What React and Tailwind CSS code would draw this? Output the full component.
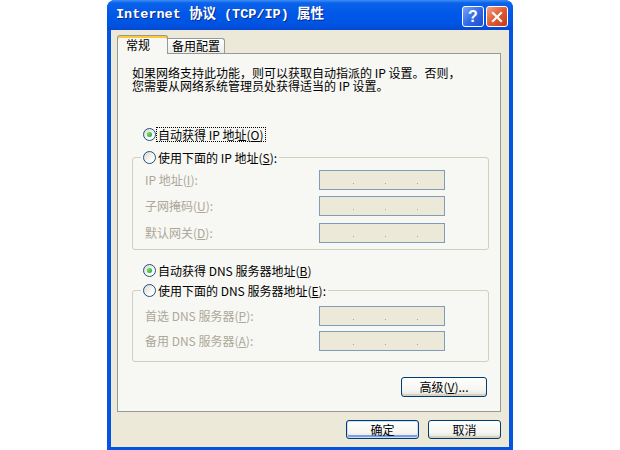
import React from 'react';

const Acc = ({ children }) => <span className="underline underline-offset-[1px]">{children}</span>;

function Radio({ checked }) {
  return (
    <span className="w-[13px] h-[13px] shrink-0 rounded-full border border-[#1c5180] bg-[linear-gradient(135deg,#d9d6cc,#ffffff_70%)] flex items-center justify-center">
      {checked && <span className="w-[5px] h-[5px] rounded-full bg-[radial-gradient(circle_at_35%_35%,#6fe06f,#1a9a1a)]" />}
    </span>
  );
}

function IpField() {
  return (
    <div className="w-[126px] h-[20px] border border-[#7f9db9] bg-[#ece9d8] flex items-end pl-[33px] pb-[5px] gap-[31px]">
      <span className="w-[1px] h-[1px] bg-[#aca899]" />
      <span className="w-[1px] h-[1px] bg-[#aca899]" />
      <span className="w-[1px] h-[1px] bg-[#aca899]" />
    </div>
  );
}

function FieldRow({ label, className = '' }) {
  return (
    <div className={`flex items-center ${className}`}>
      <span className="w-[178px] pl-[4px] text-[#aca899] leading-[14px]">{label}</span>
      <IpField />
    </div>
  );
}

function XpButton({ children, className = '', isDefault }) {
  const ring = isDefault
    ? 'shadow-[inset_0_0_0_1px_#cedcf7,inset_0_-2px_0_1px_#7a9de6]'
    : 'shadow-[inset_0_-2px_0_0_#d6d0c5]';
  return (
    <div className={`flex items-center justify-center rounded-[3px] border border-[#003c74] bg-[linear-gradient(to_bottom,#ffffff,#f4f4f0_70%,#e3e0d6)] leading-[14px] ${ring} ${className}`}>
      {children}
    </div>
  );
}

export default function App() {
  return (
    <div className="w-[620px] h-[450px] bg-white flex justify-center font-['Noto_Sans_CJK_SC',sans-serif] text-[12px] text-black">
      <div className="w-[406px] h-[450px] flex flex-col rounded-t-[8px] overflow-hidden bg-[#0553e1]">
        {/* title bar */}
        <div className="h-[30px] shrink-0 flex items-center pl-[9px] pr-[5px] bg-[linear-gradient(to_bottom,#3d8ff6_0%,#0b62ea_10%,#0058e8_45%,#0053e1_85%,#0547d2_100%)]">
          <span className="flex-1 text-white font-bold text-[13.5px] leading-[16px] font-['Liberation_Mono','Noto_Sans_CJK_SC',monospace] [text-shadow:1px_1px_0_#0b2a8c]">
            Internet 协议 (TCP/IP) 属性
          </span>
          <div className="flex items-center gap-[2px] mt-[3px]">
            <div className="w-[22px] h-[21px] rounded-[3px] border border-white bg-[linear-gradient(135deg,#78a6f8,#2f67e6_55%,#1c4ed2)] flex items-center justify-center text-white font-bold text-[16px] leading-none font-['Liberation_Sans',sans-serif]">
              ?
            </div>
            <div className="w-[22px] h-[21px] rounded-[3px] border border-white bg-[linear-gradient(135deg,#f2a283,#e05a32_50%,#c23d18)] flex items-center justify-center">
              <svg width="12" height="12" viewBox="0 0 12 12">
                <path d="M2 2 L10 10 M10 2 L2 10" stroke="#fff" strokeWidth="2.2" strokeLinecap="square" />
              </svg>
            </div>
          </div>
        </div>

        {/* dialog body */}
        <div className="flex-1 mx-[4px] mb-[3px] bg-[#ece9d8] flex flex-col pl-[6px] pr-[8px] pt-[5px]">
          {/* tabs */}
          <div className="flex items-end">
            <div className="relative z-10 w-[51px] h-[19px] -mb-px bg-[#f7f7f3] border border-b-0 border-[#919b9c] rounded-t-[3px] shadow-[inset_0_2px_0_#ffc83c] pl-[8px] pt-[2px] leading-[14px]">
              常规
            </div>
            <div className="w-[57px] h-[15px] bg-[linear-gradient(to_bottom,#ffffff,#ecebe6)] border border-b-0 border-l-0 border-[#919b9c] rounded-tr-[3px] pl-[4px] leading-[14px]">
              备用配置
            </div>
          </div>

          {/* tab panel */}
          <div className="h-[359px] bg-[#f7f7f3] border border-[#919b9c] flex flex-col pl-[14px] pr-[11px] pt-[12px]">
            <div className="leading-[13px]">
              <div>如果网络支持此功能，则可以获取自动指派的 IP 设置。否则，</div>
              <div>您需要从网络系统管理员处获得适当的 IP 设置。</div>
            </div>

            <div className="h-[16px] mt-[34px] ml-[11px] flex items-center gap-[1px]">
              <Radio checked />
              <span className="outline outline-1 outline-dotted outline-black px-[1px] leading-[13px]">
                自动获得 IP 地址(<Acc>O</Acc>)
              </span>
            </div>

            <fieldset className="mt-[7px] border border-[#d0d0bf] rounded-[3px] pl-[8px] pb-[6px]">
              <legend className="h-[16px] px-[2px] flex items-center gap-[2px]">
                <Radio />
                <span className="leading-[13px]">使用下面的 IP 地址(<Acc>S</Acc>):</span>
              </legend>
              <FieldRow className="mt-[5px]" label={<>IP 地址(<Acc>I</Acc>):</>} />
              <FieldRow className="mt-[6px]" label={<>子网掩码(<Acc>U</Acc>):</>} />
              <FieldRow className="mt-[7px]" label={<>默认网关(<Acc>D</Acc>):</>} />
            </fieldset>

            <div className="h-[16px] mt-[12px] ml-[11px] flex items-center gap-[2px]">
              <Radio checked />
              <span className="leading-[13px]">自动获得 DNS 服务器地址(<Acc>B</Acc>)</span>
            </div>

            <fieldset className="mt-[4px] border border-[#d0d0bf] rounded-[3px] pl-[8px] pb-[10px]">
              <legend className="h-[16px] px-[2px] flex items-center gap-[2px]">
                <Radio />
                <span className="leading-[13px]">使用下面的 DNS 服务器地址(<Acc>E</Acc>):</span>
              </legend>
              <FieldRow className="mt-[8px]" label={<>首选 DNS 服务器(<Acc>P</Acc>):</>} />
              <FieldRow className="mt-[5px]" label={<>备用 DNS 服务器(<Acc>A</Acc>):</>} />
            </fieldset>

            <XpButton className="self-end mt-[15px] mr-[2px] w-[86px] h-[20px]">
              高级(<Acc>V</Acc>)...
            </XpButton>
          </div>

          {/* bottom buttons */}
          <div className="mt-[8px] flex justify-end gap-[9px]">
            <XpButton isDefault className="w-[73px] h-[19px]">确定</XpButton>
            <XpButton className="w-[73px] h-[19px]">取消</XpButton>
          </div>
        </div>
      </div>
    </div>
  );
}
